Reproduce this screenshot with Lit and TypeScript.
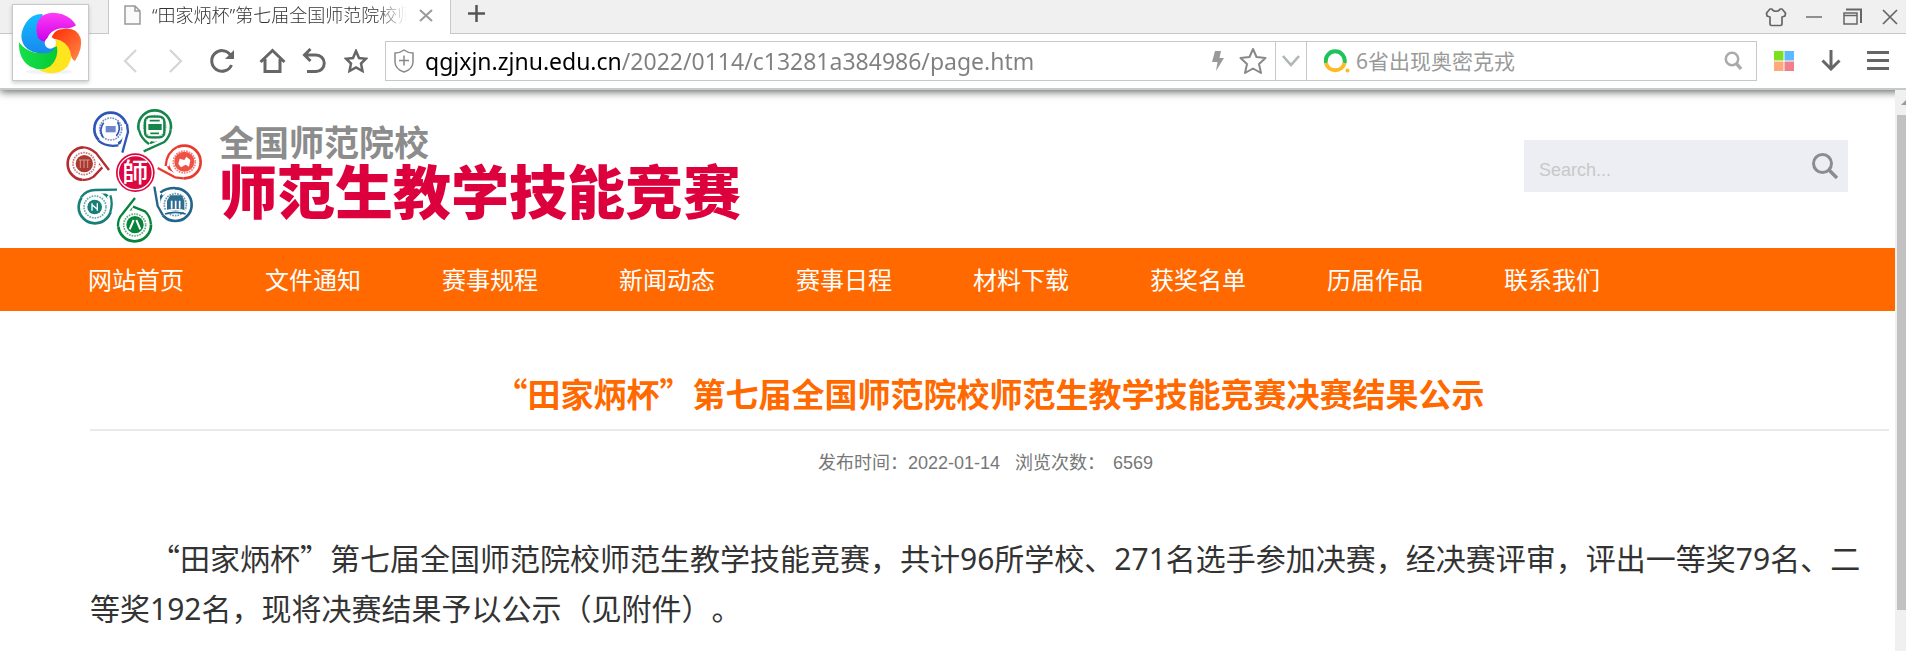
import { LitElement, html, css, svg } from "lit";
import { customElement, property } from "lit/decorators.js";

const NAV_ITEMS = [
  "网站首页", "文件通知", "赛事规程", "新闻动态", "赛事日程",
  "材料下载", "获奖名单", "历届作品", "联系我们",
];

@customElement("browser-chrome")
class BrowserChrome extends LitElement {
  @property() tabTitle = "";
  @property() url = "";

  static styles = css`
    :host { display: block; position: relative; z-index: 1; background: #fff; border-bottom: 2px solid #c3cac8;
      box-shadow: 0 2px 8px rgba(0, 0, 0, 0.6); font-family: "Noto Sans", "Noto Sans CJK SC", sans-serif; }
    svg { display: block; fill: none; }
    button { display: flex; align-items: center; justify-content: center; border: 0; padding: 0; background: none; flex: none; }
    input { border: 0; outline: 0; padding: 0; margin: 0; background: none; min-width: 0; font-family: inherit; }
    .tabs { display: flex; height: 34px; background: #f0f0f0; }
    .lead { width: 109px; box-sizing: border-box; border-right: 1px solid #c8c8c8; border-bottom: 1px solid #c8c8c8; }
    .tab { display: flex; align-items: center; width: 341px; box-sizing: border-box; background: #fff; padding: 0 17px 4px 15px; }
    .tab-title { flex: 1; margin: 0 12px 0 11px; font-size: 18px; line-height: 26px; color: #333; font-weight: 300; white-space: nowrap; overflow: hidden;
      -webkit-mask-image: linear-gradient(90deg, #000 88%, transparent); mask-image: linear-gradient(90deg, #000 88%, transparent); }
    .rest { flex: 1; display: flex; align-items: center; border-left: 1px solid #c8c8c8; border-bottom: 1px solid #c8c8c8; padding: 0 4px 0 17px; }
    .spacer { flex: 1; }
    .window { display: flex; gap: 14px; }
    .window button { width: 24px; height: 24px; }
    .plus { padding-bottom: 6px; }
    .bar { display: flex; align-items: center; height: 54px; box-sizing: border-box; padding: 0 14px 1px 116px; }
    .icons { display: flex; align-items: center; width: 269px; }
    .icons button { width: 28px; height: 28px; }
    .back { margin-right: 18px; }
    .forward { margin-right: 18px; }
    .reload { margin-right: 22px; }
    .home { margin-right: 14px; }
    .undo { margin-right: 14px; }
    .field { flex: 1; display: flex; align-items: stretch; height: 40px; box-sizing: border-box; border: 1px solid #c8c8c8; }
    .address { flex: 1; display: flex; align-items: center; padding: 0 8px; gap: 11px; }
    .address input { flex: 1; height: 34px; font-size: 23px; line-height: 34px; color: transparent;
      background: linear-gradient(90deg, #000 197px, #808080 197px); -webkit-background-clip: text; background-clip: text; }
    .address button { margin-left: 4px; }
    .drop { width: 32px; border: solid #c8c8c8; border-width: 0 1px; }
    .query { display: flex; align-items: center; width: 449px; box-sizing: border-box; padding: 0 13px 0 17px; gap: 6px; }
    .query input { flex: 1; height: 32px; font-size: 21px; }
    .query input::placeholder { color: #999; }
    .tools { display: flex; gap: 19px; margin-left: 13px; }
    .tools button { width: 28px; height: 28px; }
    .badge { position: absolute; left: 12px; top: 4px; width: 77px; height: 77px; box-sizing: border-box;
      background: #fff; border: 1px solid #c8c8c8; box-shadow: 0 2px 4px rgba(0, 0, 0, 0.2); }
  `;

  render() {
    return html`
      <div class="tabs">
        <div class="lead"></div>
        <div class="tab">
          <svg width="17" height="20" viewBox="0 0 17 20" stroke="#999" stroke-width="1.5"><path d="M1 1H11L16 6V19H1ZM11 1V6H16" fill="#fafafa" /></svg>
          <div class="tab-title">${this.tabTitle}</div>
          <button aria-label="关闭标签"><svg width="14" height="14" viewBox="0 0 14 14" stroke="#999" stroke-width="2"><path d="M1 2L13 13M13 2L1 13" /></svg></button>
        </div>
        <div class="rest">
          <button class="plus" aria-label="新标签"><svg width="17" height="17" viewBox="0 0 17 17" stroke="#555" stroke-width="2.5"><path d="M8.500 0V17M0 8.500H17" /></svg></button>
          <span class="spacer"></span>
          <div class="window">
            <button aria-label="皮肤"><svg width="22" height="20" viewBox="0 0 22 20" stroke="#666" stroke-width="1.700" stroke-linejoin="round"><path d="M7 2C8 5 14 5 15 2H17L20.500 6 20 9 17 10V17Q17 18.500 15.500 18.500H6.500Q5 18.500 5 17V10L2 9 1.500 6 5 2Z" /></svg></button>
            <button aria-label="最小化"><svg width="16" height="4" viewBox="0 0 16 4" stroke="#777" stroke-width="1.600"><path d="M0 2H16" /></svg></button>
            <button aria-label="还原"><svg width="19" height="17" viewBox="0 0 19 17" stroke="#666" stroke-width="1.500"><path d="M1 5H14V16H1ZM1 7.500H14" /><path d="M3 1.500H18V15" stroke-width="2" /></svg></button>
            <button aria-label="关闭"><svg width="16" height="16" viewBox="0 0 16 16" stroke="#666" stroke-width="1.700"><path d="M1 1L15 15M15 1L1 15" /></svg></button>
          </div>
        </div>
      </div>
      <div class="bar">
        <div class="icons">
          <button class="back" aria-label="后退"><svg width="14" height="24" viewBox="0 0 14 24" stroke="#d5d5d5" stroke-width="2.200"><path d="M13 1L2 12L13 23" /></svg></button>
          <button class="forward" aria-label="前进"><svg width="14" height="24" viewBox="0 0 14 24" stroke="#d5d5d5" stroke-width="2.200"><path d="M1 1L12 12L1 23" /></svg></button>
          <button class="reload" aria-label="刷新"><svg width="26" height="26" viewBox="0 0 26 26" stroke="#666" stroke-width="3"><path d="M21.500 7A10.300 10.300 0 1 0 22.500 17" /><path d="M25 2V11H16Z" fill="#666" stroke="none" /></svg></button>
          <button class="home" aria-label="主页"><svg width="27" height="26" viewBox="0 0 27 26" stroke="#666" stroke-width="3"><path d="M1.500 14L13.500 2.500L25.500 14M6 11V23.500H21V11" /></svg></button>
          <button class="undo" aria-label="撤销"><svg width="24" height="26" viewBox="0 0 24 26" stroke="#666" stroke-width="3"><path d="M2 7H14A8 8 0 0 1 14 23.500H5M8.500 1L2.500 7L8.500 13" /></svg></button>
          <button aria-label="收藏"><svg width="24" height="24" viewBox="0 0 24 24" stroke="#666" stroke-width="2.500"><path d="M12 2L15 9L22 9.700L17 14.500L18.500 22L12 18.500L5.500 22L7 14.500L2 9.700L9 9Z" /></svg></button>
        </div>
        <div class="field">
          <div class="address">
            <svg width="20" height="24" viewBox="0 0 20 24" stroke="#888" stroke-width="1.500"><path d="M10 1Q14 4 19 4V13Q19 20 10 23Q1 20 1 13V4Q6 4 10 1ZM10 6.500V16.500M5 11.500H15" /></svg>
            <input aria-label="网址" .value=${this.url} spellcheck="false" />
            <button aria-label="极速模式"><svg width="12" height="20" viewBox="0 0 12 20"><path d="M3 0H9L7.500 7H12L4 20L5.500 11H0Z" fill="#999" /></svg></button>
            <button aria-label="加入收藏"><svg width="28" height="28" viewBox="0 0 28 28" stroke="#888" stroke-width="2" stroke-linejoin="round"><path d="M14 2L17.500 10L26.500 11L20 17L22 26L14 21.500L6 26L8 17L1.500 11L10.500 10Z" /></svg></button>
          </div>
          <button class="drop" aria-label="更多地址"><svg width="18" height="12" viewBox="0 0 18 12" stroke="#b0b5b8" stroke-width="2.500"><path d="M1 1L9 10L17 1" /></svg></button>
          <div class="query">
            <svg width="26" height="26" viewBox="0 0 26 26" stroke-width="4"><path d="M2 15A9.500 9.500 0 1 1 20.500 15" stroke="#1fc25b" /><path d="M2 15A9.500 9.500 0 0 0 20.500 15" stroke="#fdbb22" /><circle cx="23.500" cy="22.500" r="2" fill="#fdbb22" /></svg>
            <input aria-label="搜索" placeholder="6省出现奥密克戎" />
            <button aria-label="搜索"><svg width="19" height="20" viewBox="0 0 19 20" stroke="#aaa" stroke-width="2.500"><circle cx="8" cy="8" r="6.200" /><path d="M12 12L17 18" stroke-width="3.500" /></svg></button>
          </div>
        </div>
        <div class="tools">
          <button aria-label="应用"><svg width="20" height="20" viewBox="0 0 20 20"><path d="M0 0H9.500V9.500H0Z" fill="#7de01e" /><path d="M10.500 0H20V9.500H10.500Z" fill="#5cb8ff" /><path d="M0 10.500H9.500V20H0Z" fill="#ffa879" /><path d="M10.500 10.500H20V20H10.500Z" fill="#f27d8b" /></svg></button>
          <button aria-label="下载"><svg width="20" height="21" viewBox="0 0 20 21" stroke="#666" stroke-width="3"><path d="M10 0V19M1.500 10.500L10 19L18.500 10.500" /></svg></button>
          <button aria-label="菜单"><svg width="22" height="19" viewBox="0 0 22 19" stroke="#666" stroke-width="3"><path d="M0 1.500H22M0 9.500H22M0 17.500H22" /></svg></button>
        </div>
      </div>
      <div class="badge">
        <svg width="75" height="75" viewBox="0 0 225 225">
          <defs>
            <linearGradient id="m" x2="0" y2="1"><stop stop-color="#ff3df5" /><stop offset="1" stop-color="#cc00e8" /></linearGradient>
            <linearGradient id="b" x2="0" y2="1"><stop stop-color="#12bdff" /><stop offset="1" stop-color="#1988ee" /></linearGradient>
            <linearGradient id="g" x2="1" y2="0"><stop stop-color="#16e04a" /><stop offset="1" stop-color="#06c935" /></linearGradient>
            <linearGradient id="o" x2="1" y2="1"><stop stop-color="#ff2800" /><stop offset="1" stop-color="#ff8b4a" /></linearGradient>
          </defs>
          <ellipse cx="108" cy="200" rx="70" ry="8" fill="#f3f3f3" />
          <path d="M112 112L126 104C165 104 190 138 166 180C148 208 105 210 80 196Q118 184 130 144Z" fill="#ffe51e" />
          <path d="M112 112Q118 72 154 72Q192 68 203 100Q210 130 186 168Q174 162 172 140Q162 108 126 102Z" fill="url(#o)" />
          <path d="M18 112Q36 138 72 144Q106 146 118 130L132 124Q138 160 112 184Q84 202 50 184Q16 162 18 112Z" fill="url(#g)" />
          <path d="M88 27Q58 26 40 52Q14 92 34 122Q52 146 96 145Q118 142 126 128L100 106Z" fill="url(#b)" />
          <path d="M74 96Q62 58 86 34Q112 16 148 28Q176 38 189 61Q176 72 150 70Q108 72 100 110Q82 110 74 96Z" fill="url(#m)" />
          <circle cx="112" cy="114" r="17" fill="#fff" />
        </svg>
      </div>
    `;
  }
}

@customElement("site-header")
class SiteHeader extends LitElement {
  static styles = css`
    :host { display: block; font-family: "Noto Sans CJK SC", sans-serif; }
    .top { display: flex; align-items: center; justify-content: space-between; height: 158px; box-sizing: border-box; padding: 0 47px 0 65px; }
    .brand { display: flex; align-items: center; gap: 16px; text-decoration: none; padding-top: 14px; }
    .emblem { display: block; fill: none; }
    .words { display: flex; flex-direction: column; font-weight: 900; white-space: nowrap; padding-bottom: 10px; }
    .small { color: #8c8c8c; font-size: 35px; line-height: 36px; font-weight: 700; }
    .large { color: #dc003c; font-size: 58px; line-height: 60px; }
    .search { display: flex; align-items: center; width: 324px; height: 52px; box-sizing: border-box; margin-bottom: 6px; padding: 0 10px 0 15px; background: #edeef3; }
    .search input { flex: 1; min-width: 0; border: 0; outline: 0; background: none; padding: 8px 0 0 0; font: 18px/24px "Liberation Sans", sans-serif; }
    .search input::placeholder { color: #c8c8c8; }
    .search button { border: 0; background: none; padding: 0; }
    .search svg { display: block; fill: none; }
    nav { background: #ff6900; height: 63px; box-sizing: border-box; padding: 0 48px 2px; display: flex; align-items: center; }
    nav a { margin: 0 41px 0 40px; color: #fff; font-size: 24px; line-height: 36px; text-decoration: none; white-space: nowrap; }
  `;

  private badge(x: number, y: number, color: string, tail: string, mark: unknown) {
    return svg`
      <circle cx=${x} cy=${y} r="49" stroke=${color} stroke-width="8" />
      <path d=${tail} stroke="#fff" stroke-width="22" />
      <path d=${tail} stroke=${color} stroke-width="7" stroke-linejoin="round" />
      <circle cx=${x} cy=${y} r="33" stroke=${color} stroke-width="5" stroke-dasharray="5 3" opacity="0.65" />
      ${mark}`;
  }

  render() {
    return html`
      <div class="top">
        <a class="brand" href="#">
          <svg class="emblem" width="138" height="136" viewBox="46 24 414 408" aria-hidden="true">
            ${this.badge(183, 87, "#2f55b5", "M218 158L235 96L232 72M206 136Q170 142 146 122",
              svg`<path d="M168 78H198V97H168Z" fill="#7184ce" /><path d="M160 112Q146 88 162 68M204 66Q216 88 200 108" stroke="#2f55b5" stroke-width="5" />`)}
            ${this.badge(315, 80, "#15854a", "M282 154L344 126Q362 108 363 88M298 132Q274 116 268 90",
              svg`<rect x="286" y="50" width="58" height="62" rx="14" stroke="#15854a" stroke-width="7" /><path d="M296 72H336V90H296Z" fill="#15854a" /><path d="M300 62H330M302 100H328" stroke="#15854a" stroke-width="5" />`)}
            ${this.badge(103, 191, "#b22d30", "M178 210L140 160Q120 142 100 142M158 202L132 230Q116 242 98 239",
              svg`<circle cx="104" cy="191" r="26" fill="#a93a32" /><path d="M92 180V204M103 180V204M114 180V204M88 180H120" stroke="#d9958c" stroke-width="3" />`)}
            ${this.badge(404, 186, "#e83a2e", "M324 204L376 232L402 235M348 198Q350 158 382 141",
              svg`<circle cx="404" cy="185" r="30" fill="#ef5145" /><path d="M386 192L390 176L404 180L410 170L422 180L418 200L408 194L394 202Z" fill="#fff" />`)}
            ${this.badge(136, 321, "#168078", "M202 269L136 270Q110 270 94 292M182 286Q190 310 182 336",
              svg`<circle cx="135" cy="321" r="22" fill="#168078" /><path d="M127 332V310M143 310V332M127 314L143 328" stroke="#fff" stroke-width="4" />`)}
            ${this.badge(377, 314, "#23658a", "M314 260L324 318L340 346M332 278Q348 264 376 264",
              svg`<path d="M352 332V302L362 286H396L404 302V332Z" fill="#2c6d90" /><path d="M366 302V326M378 302V326M390 302V326" stroke="#fff" stroke-width="5" /><path d="M340 336Q378 322 414 336" stroke="#fff" stroke-width="5" /><path d="M346 342Q378 332 408 342" stroke="#23658a" stroke-width="5" />`)}
            ${this.badge(255, 375, "#08843a", "M256 294L218 342Q204 356 205 380M250 320L286 334Q302 348 304 374",
              svg`<circle cx="256" cy="374" r="26" fill="#08843a" /><path d="M252 360L240 388M260 360L272 388" stroke="#fff" stroke-width="6" />`)}
            <circle cx="257" cy="218" r="58" fill="#dc0640" />
            <circle cx="257" cy="218" r="51" stroke="#fff" stroke-width="4" />
            <text x="257" y="247" text-anchor="middle" font-size="78" font-weight="500" fill="#fff">師</text>
          </svg>
          <span class="words"><span class="small">全国师范院校</span><span class="large">师范生教学技能竞赛</span></span>
        </a>
        <form class="search" @submit=${(e: Event) => e.preventDefault()}>
          <input type="text" aria-label="Search" placeholder="Search..." />
          <button aria-label="搜索"><svg width="26" height="26" viewBox="0 0 26 26" stroke="#8b8c90" stroke-width="3"><circle cx="10.500" cy="10.500" r="9" /><path d="M17 17L25 25" stroke-width="3.500" /></svg></button>
        </form>
      </div>
      <nav>${NAV_ITEMS.map((label) => html`<a href="#">${label}</a>`)}</nav>
    `;
  }
}

@customElement("notice-article")
class NoticeArticle extends LitElement {
  static styles = css`
    :host { display: block; padding: 58px 6px 0 90px; font-family: "Noto Sans CJK SC", sans-serif; text-spacing-trim: space-all; }
    h1 { margin: 0; padding-bottom: 12px; border-bottom: 2px solid #eaeaea; color: #ff6900; font-size: 33px; line-height: 48px; font-weight: 700; text-align: center; }
    .meta { display: flex; justify-content: center; gap: 15px; margin: 19px 8px 0 0; color: #777; font: 18px/26px "Liberation Sans", "Noto Sans CJK SC", sans-serif; }
    .count { margin-left: 8px; }
    .body { margin: 56px 0 0; padding-right: 8px; color: #333; font-size: 30px; line-height: 50px; text-indent: 2em; }
    .num { font-family: "Noto Sans", sans-serif; line-height: 1; }
  `;

  render() {
    return html`
      <h1>“田家炳杯”第七届全国师范院校师范生教学技能竞赛决赛结果公示</h1>
      <div class="meta"><span>发布时间：2022-01-14</span><span>浏览次数：<span class="count">6569</span></span></div>
      <p class="body">“田家炳杯”第七届全国师范院校师范生教学技能竞赛，共计<span class="num">96</span>所学校、<span class="num">271</span>名选手参加决赛，经决赛评审，评出一等奖<span class="num">79</span>名、二等奖<span class="num">192</span>名，现将决赛结果予以公示（见附件）。</p>
    `;
  }
}

@customElement("app-root")
class AppRoot extends LitElement {
  static styles = css`
    :host { display: flex; flex-direction: column; min-height: 100vh; background: #fff; }
    .view { flex: 1; display: flex; }
    .page { flex: 1; min-width: 0; }
    .scroll { position: relative; z-index: 2; width: 11px; display: flex; flex-direction: column; background: #f0f0f0; box-sizing: border-box; padding-left: 2px; }
    .arrow { height: 25px; display: flex; align-items: center; justify-content: flex-end; }
    .arrow svg { display: block; }
    .thumb { flex: 495; background: #c1c1c1; }
    .track { flex: 41; }
  `;

  render() {
    return html`
      <browser-chrome tabTitle="“田家炳杯”第七届全国师范院校师范生教学技能竞赛" url="qgjxjn.zjnu.edu.cn/2022/0114/c13281a384986/page.htm"></browser-chrome>
      <div class="view">
        <main class="page">
          <site-header></site-header>
          <notice-article lang="zh-CN"></notice-article>
        </main>
        <div class="scroll" aria-hidden="true">
          <div class="arrow"><svg width="5" height="5" viewBox="0 0 5 5"><path d="M0 5L5 0V5Z" fill="#999" /></svg></div>
          <div class="thumb"></div>
          <div class="track"></div>
        </div>
      </div>
    `;
  }
}
